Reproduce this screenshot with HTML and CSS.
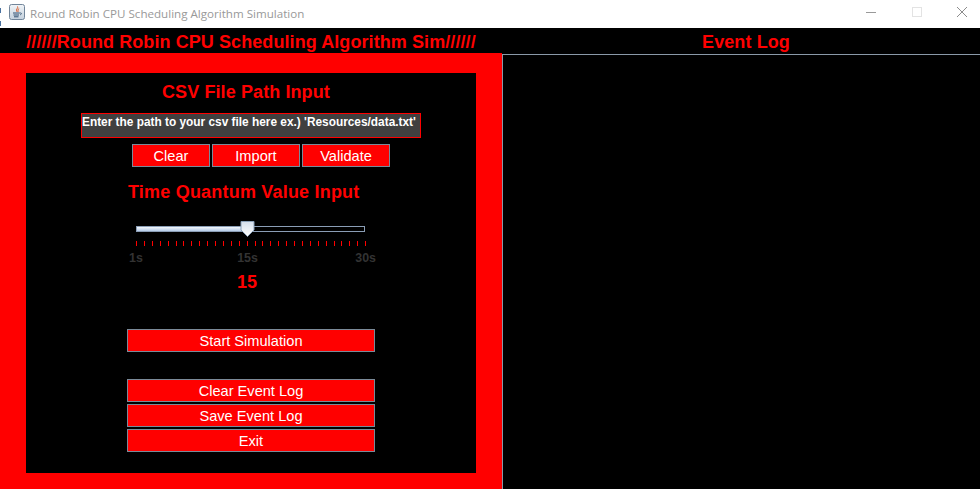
FILE: index.html
```html
<!DOCTYPE html>
<html lang="en">
<head>
    <meta charset="UTF-8">
    <title>Round Robin CPU Scheduling Algorithm Simulation</title>
    <link rel="stylesheet" href="styles.css">
</head>
<body>

    <div class="titlebar">
        <svg class="app-icon" width="16" height="16" viewBox="0 0 16 16">
            <defs>
                <linearGradient id="iconFill" x1="0" y1="0" x2="0" y2="1">
                    <stop offset="0" stop-color="#f2f5f8"/>
                    <stop offset="1" stop-color="#c3d0dd"/>
                </linearGradient>
            </defs>
            <rect x="0.5" y="0.5" width="15" height="15" rx="2" fill="url(#iconFill)" stroke="#71859a"/>
            <path d="M8.500 2.500c1 1.500-1.500 2.500-1 4 .2.600.600 1 .800 1.500M10.200 4.500c-1.500.800-1.500 1.800-.800 3" fill="none" stroke="#d9541e" stroke-width="1"/>
            <path d="M4 9h6.500M4.500 11h5.500M5 12.800h4.500" fill="none" stroke="#2f4f70" stroke-width="1"/>
            <path d="M10.500 9h1.300c1 0 1 1.500-.800 1.800" fill="none" stroke="#2f4f70" stroke-width="0.800"/>
        </svg>
        <span class="window-title">Round Robin CPU Scheduling Algorithm Simulation</span>
        <div class="window-controls">
            <svg width="10" height="10" viewBox="0 0 10 10"><path d="M0 5.500h10" stroke="#999" stroke-width="1"/></svg>
            <svg width="10" height="10" viewBox="0 0 10 10"><rect x="0.500" y="0.500" width="9" height="9" fill="none" stroke="#e3e3e3"/></svg>
            <svg width="10" height="10" viewBox="0 0 10 10"><path d="M0 0l10 10M10 0L0 10" stroke="#8c8c8c" stroke-width="1"/></svg>
        </div>
    </div>

    <div class="app">
        <div class="left-col">
            <h1 class="col-title main-title">//////Round Robin CPU Scheduling Algorithm Sim//////</h1>
            <div class="red-panel">
                <div class="control-panel">
                    <h2 class="section-title csv-title">CSV File Path Input</h2>
                    <div class="path-input">Enter the path to your csv file here ex.) 'Resources/data.txt'</div>
                    <div class="file-buttons">
                        <button class="btn btn-clear">Clear</button>
                        <button class="btn btn-import">Import</button>
                        <button class="btn btn-validate">Validate</button>
                    </div>
                    <h2 class="section-title quantum-title">Time Quantum Value Input</h2>

                    <div class="slider">
                        <div class="track"><div class="track-fill"></div></div>
                        <svg class="thumb" width="15" height="16" viewBox="0 0 15 16">
                            <defs>
                                <linearGradient id="thumbFill" x1="0" y1="0" x2="0" y2="1">
                                    <stop offset="0" stop-color="#d5dfeb"/>
                                    <stop offset="1" stop-color="#ffffff"/>
                                </linearGradient>
                            </defs>
                            <path d="M1 .5h13v8.500L7.500 15.500 1 9z" fill="url(#thumbFill)" stroke="#8aa0b8"/>
                        </svg>
                        <svg class="ticks" id="ticks" width="230" height="5"></svg>
                        <div class="tick-labels">
                            <span>1s</span>
                            <span class="mid-label">15s</span>
                            <span>30s</span>
                        </div>
                    </div>
                    <div class="quantum-value">15</div>

                    <div class="wide-buttons">
                        <button class="btn btn-wide btn-start">Start Simulation</button>
                        <button class="btn btn-wide">Clear Event Log</button>
                        <button class="btn btn-wide">Save Event Log</button>
                        <button class="btn btn-wide">Exit</button>
                    </div>
                </div>
            </div>
        </div>
        <div class="right-col">
            <h1 class="col-title log-title">Event Log</h1>
            <div class="log-area"></div>
        </div>
    </div>

    <script>
        const ticks = document.getElementById('ticks');
        for (let i = 0; i < 30; i++) {
            const line = document.createElementNS('http://www.w3.org/2000/svg', 'rect');
            line.setAttribute('x', Math.round(i * 7.9));
            line.setAttribute('width', 1);
            line.setAttribute('height', 5);
            line.setAttribute('fill', '#f00');
            ticks.appendChild(line);
        }
    </script>

</body>
</html>
```

FILE: styles.css
```css
* {
    box-sizing: border-box;
}

html, body {
    height: 100%;
}

body {
    font-family: "Liberation Sans", Arial, sans-serif;
    margin: 0;
    background-color: #000;
    overflow: hidden;
    display: flex;
    flex-direction: column;
}

.titlebar {
    height: 28px;
    background: repeating-linear-gradient(#fff 0 8px, #4a72a0 8px 13px) left top / 1px 100% no-repeat, #fff;
    display: flex;
    align-items: center;
    padding-left: 9px;
    padding-bottom: 2px;
    flex-shrink: 0;
}

.app-icon {
    margin-right: 5px;
    margin-bottom: 2px;
}

.window-title {
    font-family: "Open Sans", sans-serif;
    font-size: 11.6px;
    color: #999;
}

.window-controls {
    margin-left: auto;
    margin-bottom: 2px;
    display: flex;
    gap: 35.500px;
    padding-right: 13px;
}

.app {
    flex: 1;
    display: flex;
}

.left-col {
    width: 502px;
    display: flex;
    flex-direction: column;
}

.right-col {
    flex: 1;
    display: flex;
    flex-direction: column;
}

.col-title {
    height: 25px;
    line-height: 27px;
    margin: 0;
    font-size: 18px;
    font-weight: bold;
    color: #f00;
    text-align: center;
    white-space: nowrap;
    flex-shrink: 0;
}

.main-title {
    letter-spacing: 0.08px;
    line-height: 28px;
}

.log-title {
    height: 26px;
    line-height: 28px;
    padding-left: 10px;
    letter-spacing: 0.1px;
}

.red-panel {
    flex: 1;
    background-color: #f00;
    padding: 20px 26px 16px 26px;
}

.control-panel {
    width: 450px;
    height: 400px;
    background-color: #000;
    display: flex;
    flex-direction: column;
}

.log-area {
    flex: 1;
    border-top: 1px solid #8a99a8;
    border-left: 1px solid #8a99a8;
    background-color: #000;
}

.section-title {
    margin: 0;
    font-size: 18px;
    line-height: 20px;
    font-weight: bold;
    color: #f00;
    white-space: nowrap;
}

.csv-title {
    margin-top: 9px;
    margin-left: 136px;
    letter-spacing: 0.1px;
}

.path-input {
    width: 340px;
    height: 25px;
    margin-top: 11px;
    margin-left: 55px;
    border: 1px solid #f00;
    background-color: #404040;
    color: #fff;
    font-size: 11.860px;
    font-weight: bold;
    line-height: 17px;
    white-space: nowrap;
}

.file-buttons {
    display: flex;
    gap: 2px;
    margin-top: 6px;
    margin-left: 106px;
}

.btn {
    height: 23px;
    padding: 1px 0 0;
    border: 1px solid #7a8a99;
    background-color: #f00;
    color: #fff;
    font-family: "Liberation Sans", Arial, sans-serif;
    font-size: 14.600px;
    line-height: 21px;
    cursor: pointer;
}

.btn-clear {
    width: 78px;
}

.btn-import {
    width: 88px;
}

.btn-validate {
    width: 88px;
}

.quantum-title {
    margin-top: 15px;
    margin-left: 102px;
    letter-spacing: 0.2px;
}

.slider {
    position: relative;
    width: 230px;
    margin-top: 24px;
    margin-left: 110px;
}

.track {
    width: 229px;
    height: 6px;
    border: 1px solid #8a9db5;
    background-color: #000;
}

.track-fill {
    width: 48%;
    height: 100%;
    background: linear-gradient(#f4f8fd, #b5cbe8);
}

.thumb {
    position: absolute;
    left: 104px;
    top: -5px;
}

.ticks {
    display: block;
    margin-top: 9px;
}

.tick-labels {
    display: flex;
    justify-content: space-between;
    margin: 5px -10px 0 -7px;
    font-size: 12.400px;
    line-height: 14px;
    font-weight: bold;
    color: #333;
}

.mid-label {
    margin-right: 3px;
}

.quantum-value {
    width: 230px;
    margin-top: 7px;
    margin-left: 110px;
    padding-right: 8px;
    font-size: 18px;
    line-height: 20px;
    font-weight: bold;
    color: #f00;
    text-align: center;
}

.wide-buttons {
    display: flex;
    flex-direction: column;
    gap: 2px;
    margin-top: 37px;
    margin-left: 101px;
}

.btn-wide {
    width: 248px;
}

.btn-start {
    margin-bottom: 25px;
}
```
